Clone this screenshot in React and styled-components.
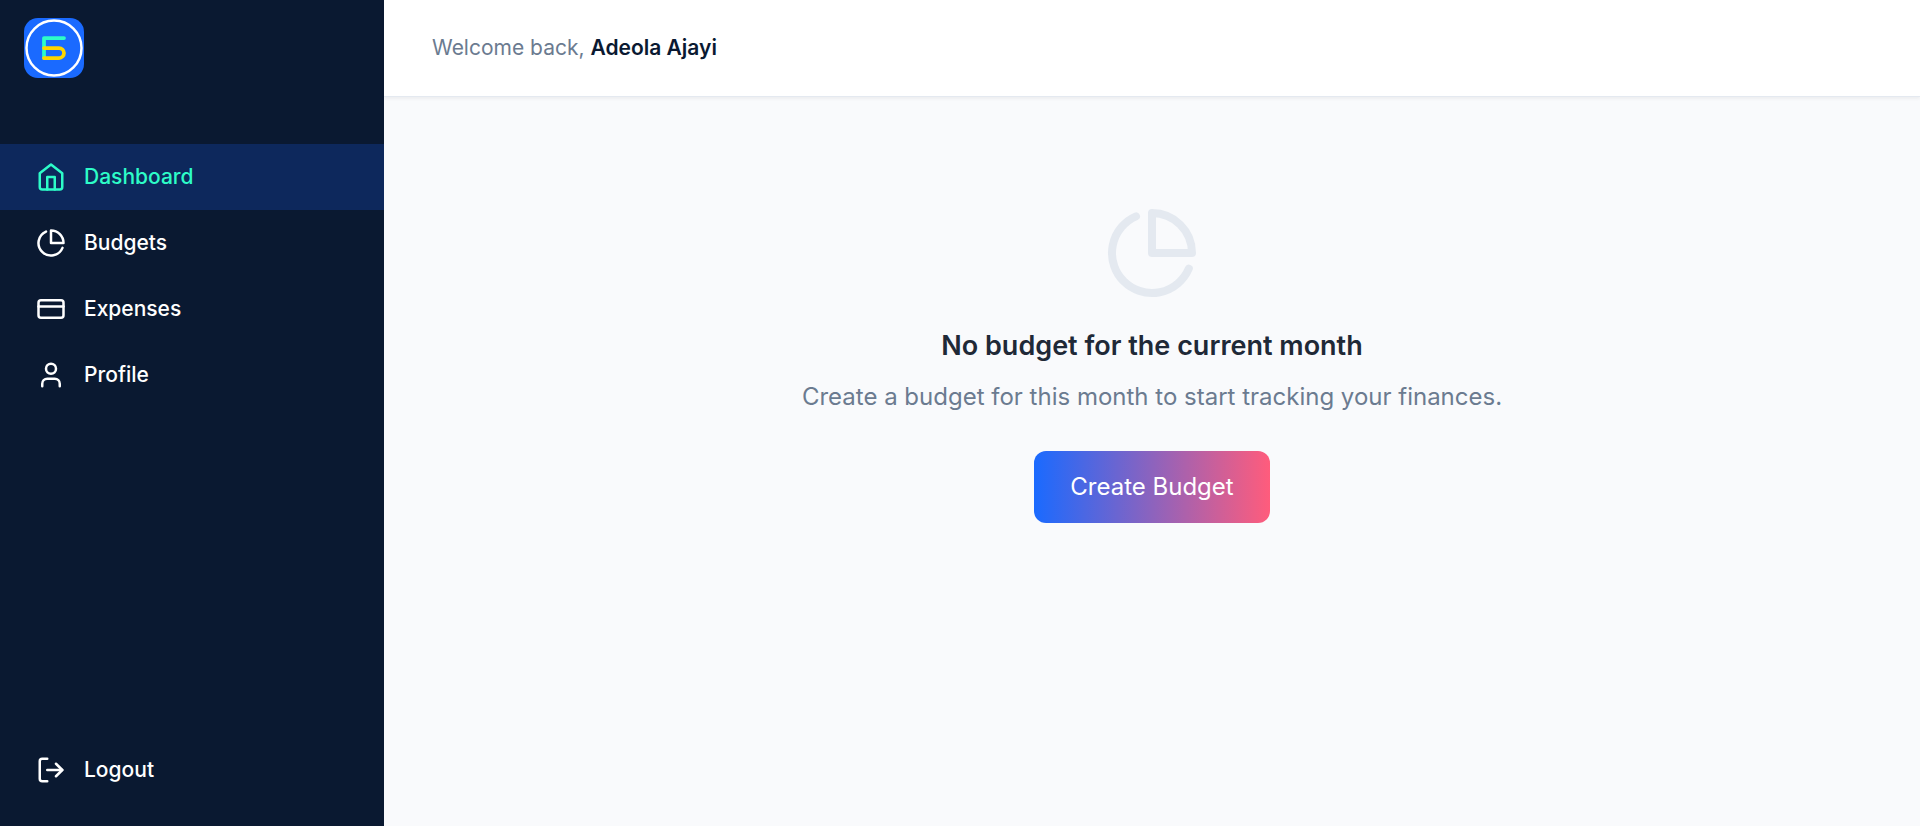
import React from "react";
import styled, { createGlobalStyle } from "styled-components";
import { FiHome, FiPieChart, FiLogOut } from "react-icons/fi";
import { CreditCard, User } from "lucide-react";

const GlobalStyle = createGlobalStyle`
  *, *::before, *::after { box-sizing: border-box; }
  body {
    margin: 0;
    font-family: Inter, "Liberation Sans", sans-serif;
    font-size: 24px;
    line-height: 36px;
    background: #f9fafc;
  }
`;

const Layout = styled.div`
  display: flex;
  min-height: 100vh;
`;

const Sidebar = styled.aside`
  display: flex;
  flex-direction: column;
  flex: 0 0 384px;
  background: #0a1931;
`;

const Brand = styled.a`
  display: flex;
  align-items: center;
  height: 96px;
  padding: 0 24px;
`;

const Nav = styled.nav`
  display: flex;
  flex: 1;
  flex-direction: column;
  padding: 48px 0 23px;
`;

const NavItem = styled.a`
  display: flex;
  align-items: center;
  gap: 18px;
  width: 100%;
  padding: 18px 36px;
  border: 0;
  background: ${(p) => (p.$active ? "#0d285c" : "transparent")};
  color: ${(p) => (p.$active ? "#2dfcc8" : "#ffffff")};
  font: 500 21px/30px Inter, "Liberation Sans", sans-serif;
  text-decoration: none;
  cursor: pointer;
`;

const LogoutItem = styled(NavItem)`
  margin-top: auto;
`;

const Content = styled.div`
  display: flex;
  flex: 1;
  flex-direction: column;
  min-width: 0;
`;

const Header = styled.header`
  display: flex;
  align-items: center;
  height: 97px;
  padding: 0 48px;
  border-bottom: 1px solid #e4e9f0;
  background: #ffffff;
  box-shadow: 0 2px 3px rgba(0, 0, 0, 0.05);
`;

const Greeting = styled.p`
  margin: 0;
  color: #6b7b90;
  font-size: 21px;
  line-height: 30px;

  strong {
    color: #0a1931;
    font-weight: 600;
  }
`;

const EmptyState = styled.main`
  display: flex;
  flex-direction: column;
  align-items: center;
  padding: 108px 36px;
  text-align: center;
`;

const EmptyIcon = styled(FiPieChart)`
  color: #e4e9f0;
`;

const Title = styled.h1`
  margin: 24px 0 12px;
  color: #1f2937;
  font-size: 27px;
  font-weight: 600;
  line-height: 42px;
`;

const Message = styled.p`
  margin: 0 0 36px;
  color: #6b7b90;
`;

const PrimaryButton = styled.button`
  padding: 18px 36px;
  border: 0;
  border-radius: 12px;
  background: linear-gradient(to right, #1a6aff, #ff5c7c);
  color: #ffffff;
  font: inherit;
  cursor: pointer;
`;

const links = [
  { label: "Dashboard", icon: FiHome, active: true },
  { label: "Budgets", icon: FiPieChart },
  { label: "Expenses", icon: CreditCard },
  { label: "Profile", icon: User },
];

function Logo() {
  return (
    <svg width="60" height="60" viewBox="0 0 60 60" fill="none" aria-hidden="true">
      <rect width="60" height="60" rx="14" fill="#1a6aff" />
      <circle cx="30" cy="30" r="27.5" stroke="#fff" strokeWidth="2.5" />
      <g strokeWidth="3.75" strokeLinecap="round" strokeLinejoin="round">
        <path d="M40 20H20V40" stroke="#2dfcc8" />
        <path d="M20 30H35a5 5 0 0 1 0 10H20" stroke="#ffd600" />
      </g>
    </svg>
  );
}

export default function App() {
  return (
    <Layout>
      <GlobalStyle />
      <Sidebar>
        <Brand href="#" aria-label="Home">
          <Logo />
        </Brand>
        <Nav>
          {links.map(({ label, icon: Icon, active }) => (
            <NavItem key={label} href="#" $active={active} aria-current={active ? "page" : undefined}>
              <Icon size={30} />
              {label}
            </NavItem>
          ))}
          <LogoutItem as="button" type="button">
            <FiLogOut size={30} />
            Logout
          </LogoutItem>
        </Nav>
      </Sidebar>
      <Content>
        <Header>
          <Greeting>
            Welcome back, <strong>Adeola Ajayi</strong>
          </Greeting>
        </Header>
        <EmptyState>
          <EmptyIcon size={96} />
          <Title>No budget for the current month</Title>
          <Message>Create a budget for this month to start tracking your finances.</Message>
          <PrimaryButton type="button">Create Budget</PrimaryButton>
        </EmptyState>
      </Content>
    </Layout>
  );
}
